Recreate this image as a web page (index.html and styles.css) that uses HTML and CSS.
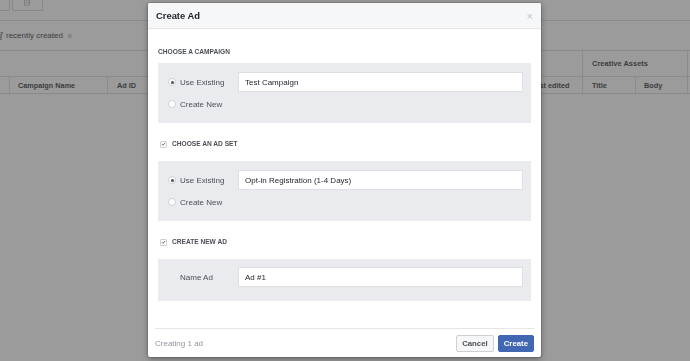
FILE: index.html
```html
<!DOCTYPE html>
<html lang="en">
<head>
    <meta charset="UTF-8">
    <meta name="viewport" content="width=device-width, initial-scale=1.0">
    <title>Create Ad</title>
    <link rel="stylesheet" href="styles.css">
</head>
<body>
    <!-- page behind the dialog -->
    <div class="page">
        <div class="toolbar">
            <span class="tool-btn tool-btn-a"></span>
            <span class="tool-btn tool-btn-b">
                <svg width="7" height="6" viewBox="0 0 7 6"><rect x="0.5" y="0" width="5" height="5" fill="none" stroke="#7d7d7d"/><path d="M2 2.5h4" stroke="#7d7d7d"/></svg>
            </span>
        </div>
        <div class="filter-bar">
            <svg class="filter-icon" width="5" height="8" viewBox="0 0 5 8"><path d="M0 0h5L3 3v5" fill="none" stroke="#5a5a5a" stroke-width="1.2"/></svg>
            <span>recently created</span>
            <span class="filter-x">&times;</span>
        </div>
        <div class="group-row">
            <div class="group-blank"></div>
            <div class="group-cell">Creative Assets</div>
            <div class="group-rest"></div>
        </div>
        <div class="col-row">
            <div class="col col-check"></div>
            <div class="col col-name">Campaign Name</div>
            <div class="col col-id">Ad ID</div>
            <div class="col col-edited">Last edited</div>
            <div class="col col-title">Title</div>
            <div class="col col-body">Body</div>
            <div class="col col-rest"></div>
        </div>
    </div>

    <div class="overlay">
        <div class="modal">
            <div class="modal-head">
                <span>Create Ad</span>
                <span class="modal-close">&times;</span>
            </div>

            <div class="modal-body">
                <div class="section-label first">Choose a Campaign</div>
                <div class="panel">
                    <div class="options">
                        <div class="option"><span class="radio is-on"></span>Use Existing</div>
                        <div class="option"><span class="radio"></span>Create New</div>
                    </div>
                    <div class="field"><div class="text-input">Test Campaign</div></div>
                </div>

                <div class="section-label check-label"><span class="checkbox">
                    <svg width="6" height="6" viewBox="0 0 6 6"><path d="M1 3.2l1.4 1.4L5 1.6" fill="none" stroke="#4b4f56" stroke-width="1"/></svg>
                </span>Choose an Ad Set</div>
                <div class="panel">
                    <div class="options">
                        <div class="option"><span class="radio is-on"></span>Use Existing</div>
                        <div class="option"><span class="radio"></span>Create New</div>
                    </div>
                    <div class="field"><div class="text-input">Opt-in Registration (1-4 Days)</div></div>
                </div>

                <div class="section-label check-label"><span class="checkbox">
                    <svg width="6" height="6" viewBox="0 0 6 6"><path d="M1 3.2l1.4 1.4L5 1.6" fill="none" stroke="#4b4f56" stroke-width="1"/></svg>
                </span>Create New Ad</div>
                <div class="panel panel-name">
                    <div class="name-label">Name Ad</div>
                    <div class="field"><div class="text-input">Ad #1</div></div>
                </div>
            </div>

            <div class="modal-foot">
                <span class="foot-note">Creating 1 ad</span>
                <div class="foot-actions">
                    <button class="btn btn-cancel">Cancel</button>
                    <button class="btn btn-create">Create</button>
                </div>
            </div>
        </div>
    </div>
</body>
</html>
```

FILE: styles.css
```css
:root {
    --shade: #9b9b9b;
    --shade-line: #8a8a8a;
    --shade-text: #3d3d3d;
    --panel-bg: #e9ebee;
    --line: #e5e5e5;
    --ink: #1d2129;
    --ink-soft: #4b4f56;
    --muted: #90949c;
    --fb-blue: #4267b2;
}

body {
    margin: 0;
    height: 361px;
    overflow: hidden;
    background: var(--shade);
    font-family: "Liberation Sans", Arial, sans-serif;
}

/* background page */
.toolbar {
    height: 21px;
    box-sizing: border-box;
    border-bottom: 1px solid var(--shade-line);
    display: flex;
    gap: 2px;
    margin-left: -6px;
}

.tool-btn {
    height: 11px;
    box-sizing: border-box;
    border: 1px solid #878787;
    border-top: none;
    border-radius: 0 0 2px 2px;
    display: flex;
    justify-content: center;
}

.tool-btn-a {
    width: 16px;
}

.tool-btn-b {
    width: 31px;
}

.filter-bar {
    height: 30px;
    box-sizing: border-box;
    border-bottom: 1px solid var(--shade-line);
    display: flex;
    align-items: center;
    gap: 3px;
    font-size: 8px;
    color: var(--shade-text);
    margin-left: -2px;
}

.filter-x {
    color: #6e6e6e;
    font-size: 9px;
    margin-left: 1px;
}

.group-row {
    height: 26px;
    box-sizing: border-box;
    border-bottom: 1px solid var(--shade-line);
    display: flex;
}

.group-blank {
    flex: none;
    width: 582px;
}

.group-cell {
    flex: none;
    width: 106px;
    box-sizing: border-box;
    border-left: 1px solid var(--shade-line);
    border-right: 1px solid var(--shade-line);
    padding-left: 9px;
    display: flex;
    align-items: center;
    font-size: 7.5px;
    font-weight: bold;
    color: var(--shade-text);
}

.col-row {
    height: 17px;
    box-sizing: border-box;
    border-bottom: 1px solid var(--shade-line);
    display: flex;
}

.col {
    flex: none;
    box-sizing: border-box;
    border-right: 1px solid var(--shade-line);
    padding-left: 8px;
    display: flex;
    align-items: center;
    font-size: 7.3px;
    font-weight: bold;
    color: var(--shade-text);
    white-space: nowrap;
    overflow: hidden;
}

.col-check { width: 10px; padding: 0; }
.col-name { width: 98px; }
.col-id { width: 415px; padding-left: 9px; }
.col-edited { width: 60px; }
.col-title { width: 53px; padding-left: 9px; }
.col-body { width: 52px; }
.col-rest { flex: 1; border: none; }

/* dialog */
.overlay {
    position: fixed;
    inset: 0;
}

.modal {
    position: absolute;
    left: 148px;
    top: 3px;
    width: 393px;
    height: 354px;
    background: #fff;
    border-radius: 2px;
    box-shadow: 0 0 0 1px rgba(0,0,0,0.12), 0 2px 6px rgba(0,0,0,0.35);
    display: flex;
    flex-direction: column;
}

.modal-head {
    height: 26px;
    box-sizing: border-box;
    background: #f6f7f9;
    border-bottom: 1px solid var(--line);
    border-radius: 2px 2px 0 0;
    padding: 0 8px;
    display: flex;
    align-items: center;
    justify-content: space-between;
    font-size: 9.4px;
    font-weight: bold;
    color: var(--ink);
}

.modal-close {
    color: #bec2c9;
    font-size: 11px;
    font-weight: normal;
}

.modal-body {
    flex: 1;
    padding: 0 10px;
}

.section-label {
    height: 10px;
    line-height: 10px;
    margin-top: 16px;
    margin-bottom: 12px;
    font-size: 6.6px;
    font-weight: bold;
    text-transform: uppercase;
    color: var(--ink-soft);
    display: flex;
    align-items: center;
}

.section-label.first {
    margin-top: 18px;
    margin-bottom: 6px;
}

.check-label {
    padding-left: 2px;
    gap: 5px;
}

.checkbox {
    width: 7px;
    height: 7px;
    box-sizing: border-box;
    border: 1px solid #ccd0d5;
    border-radius: 1px;
    background: #fff;
    display: flex;
    align-items: center;
    justify-content: center;
}

.checkbox svg {
    display: block;
}

.panel {
    background: var(--panel-bg);
    padding: 9px 8px 9px 10px;
    display: grid;
    grid-template-columns: 70px 1fr;
    font-size: 8px;
    color: var(--ink);
}

.panel-name {
    padding-top: 8px;
    padding-bottom: 14px;
}

.options {
    display: flex;
    flex-direction: column;
    gap: 2px;
}

.option {
    height: 20px;
    display: flex;
    align-items: center;
    gap: 4px;
    color: var(--ink-soft);
}

.radio {
    width: 8px;
    height: 8px;
    box-sizing: border-box;
    border-radius: 50%;
    border: 1px solid #ccd0d5;
    background: #fff;
    display: flex;
    align-items: center;
    justify-content: center;
}

.radio.is-on::after {
    content: '';
    width: 3px;
    height: 3px;
    border-radius: 50%;
    background: var(--ink-soft);
}

.name-label {
    height: 20px;
    display: flex;
    align-items: center;
    padding-left: 12px;
    color: var(--ink-soft);
}

.text-input {
    height: 20px;
    box-sizing: border-box;
    border: 1px solid #dddfe2;
    background: #fff;
    padding: 0 6px;
    display: flex;
    align-items: center;
    color: var(--ink);
}

.modal-foot {
    height: 29px;
    box-sizing: border-box;
    margin: 0 7px;
    border-top: 1px solid var(--line);
    display: flex;
    align-items: center;
    justify-content: space-between;
}

.foot-note {
    font-size: 8px;
    color: var(--muted);
}

.foot-actions {
    display: flex;
    gap: 4px;
    padding-top: 1px;
}

.btn {
    height: 17px;
    padding: 0 5px;
    border-radius: 2px;
    font-family: inherit;
    font-size: 7.8px;
    font-weight: bold;
    cursor: pointer;
}

.btn-cancel {
    background: #f6f7f9;
    border: 1px solid #ced0d4;
    color: var(--ink-soft);
}

.btn-create {
    background: var(--fb-blue);
    border: 1px solid var(--fb-blue);
    color: #fff;
}
```
